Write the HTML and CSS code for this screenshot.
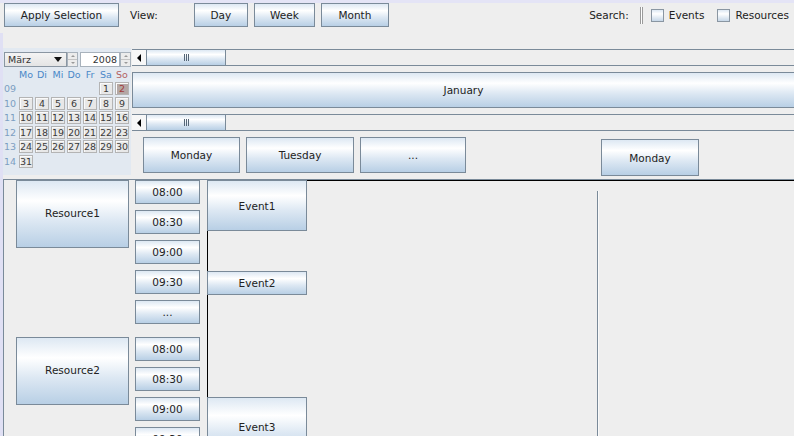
FILE: index.html
```html
<!DOCTYPE html>
<html lang="en">
<head>
  <meta charset="UTF-8">
  <title>Scheduler</title>
  <link rel="stylesheet" href="styles.css">
</head>
<body>

  <div class="frame">
    <div class="toolbar">
      <div class="btn apply">Apply Selection</div>
      <span class="label view-label">View:</span>
      <div class="btn day-btn">Day</div>
      <div class="btn week-btn">Week</div>
      <div class="btn month-btn">Month</div>

      <div class="search">
        <span class="label">Search:</span>
        <span class="sep"></span>
        <span class="check"></span>
        <span class="label">Events</span>
        <span class="check second"></span>
        <span class="label">Resources</span>
      </div>
    </div>

    <div class="main">
      <div class="top">
        <div class="calendar">
          <div class="cal-top">
            <div class="combo"><span>März</span><span class="drop"></span></div>
            <div class="spin"><span class="up"></span><span class="down"></span></div>
            <div class="year">2008</div>
            <div class="spin"><span class="up"></span><span class="down"></span></div>
          </div>
          <div class="cal-grid">
            <span></span>
            <span class="dh">Mo</span><span class="dh">Di</span><span class="dh">Mi</span><span class="dh">Do</span><span class="dh">Fr</span><span class="dh">Sa</span><span class="dh sun">So</span>

            <span class="wk">09</span>
            <span></span><span></span><span></span><span></span><span></span>
            <span class="day">1</span><span class="day sel">2</span>

            <span class="wk">10</span>
            <span class="day">3</span><span class="day">4</span><span class="day">5</span><span class="day">6</span><span class="day">7</span><span class="day">8</span><span class="day">9</span>

            <span class="wk">11</span>
            <span class="day">10</span><span class="day">11</span><span class="day">12</span><span class="day">13</span><span class="day">14</span><span class="day">15</span><span class="day">16</span>

            <span class="wk">12</span>
            <span class="day">17</span><span class="day">18</span><span class="day">19</span><span class="day">20</span><span class="day">21</span><span class="day">22</span><span class="day">23</span>

            <span class="wk">13</span>
            <span class="day">24</span><span class="day">25</span><span class="day">26</span><span class="day">27</span><span class="day">28</span><span class="day">29</span><span class="day">30</span>

            <span class="wk">14</span>
            <span class="day">31</span>
          </div>
        </div>

        <div class="header">
          <div class="hscroll">
            <div class="arrow"><span class="tri"></span></div>
            <div class="thumb"><span class="grip"></span></div>
          </div>
          <div class="btn month-bar">January</div>
          <div class="hscroll">
            <div class="arrow"><span class="tri"></span></div>
            <div class="thumb"><span class="grip"></span></div>
          </div>
          <div class="days">
            <div class="btn dayname mon">Monday</div>
            <div class="btn dayname tue">Tuesday</div>
            <div class="btn dayname more">...</div>
            <div class="btn dayname mon2">Monday</div>
          </div>
        </div>
      </div>

      <div class="schedule">
        <div class="resources">
          <div class="res-block">
            <div class="btn res">Resource1</div>
            <div class="slots">
              <div class="btn slot">08:00</div>
              <div class="btn slot">08:30</div>
              <div class="btn slot">09:00</div>
              <div class="btn slot">09:30</div>
              <div class="btn slot">...</div>
            </div>
          </div>
          <div class="res-block">
            <div class="btn res">Resource2</div>
            <div class="slots">
              <div class="btn slot">08:00</div>
              <div class="btn slot">08:30</div>
              <div class="btn slot">09:00</div>
              <div class="btn slot">09:30</div>
            </div>
          </div>
        </div>

        <div class="events">
          <div class="col first"></div>
          <div class="col second"></div>
          <div class="btn event ev1">Event1</div>
          <div class="btn event ev2">Event2</div>
          <div class="btn event ev3">Event3</div>
        </div>
      </div>
    </div>
  </div>

</body>
</html>
```

FILE: styles.css
```css
* {
  margin: 0;
  padding: 0;
  box-sizing: border-box;
}

body {
  width: 794px;
  height: 436px;
  overflow: hidden;
  background: #eeeeee;
  font-family: 'DejaVu Sans', sans-serif;
  font-size: 10.5px;
  color: #222;
}

.frame {
  border-top: 3px solid #e4e4f6;
  height: 436px;
  display: flex;
  flex-direction: column;
}

/* ocean style gradient button */
.btn {
  display: flex;
  align-items: center;
  justify-content: center;
  border: 1px solid #7a8a99;
  background: linear-gradient(#dde8f3 0%, #ffffff 30%, #dde8f3 60%, #b8cfe5 100%);
  white-space: nowrap;
}

/* toolbar */
.toolbar {
  display: flex;
  align-items: flex-start;
  flex-shrink: 0;
  height: 30px;
  padding-left: 4px;
}

.toolbar .btn {
  height: 24px;
}

.label {
  line-height: 24px;
  white-space: nowrap;
}

.apply {
  width: 115px;
}

.view-label {
  margin-left: 11px;
}

.day-btn {
  width: 54px;
  margin-left: 36px;
}

.week-btn {
  width: 61px;
  margin-left: 6px;
}

.month-btn {
  width: 68px;
  margin-left: 6px;
}

.search {
  margin-left: auto;
  margin-right: 5px;
  display: flex;
  align-items: center;
  height: 24px;
}

.sep {
  width: 3px;
  height: 17px;
  margin: 0 8px 0 11px;
  border-left: 1px solid #9a9a9a;
  border-right: 1px solid #9a9a9a;
  background: #fff;
}

.check {
  width: 13px;
  height: 13px;
  margin-right: 5px;
  border: 1px solid #8a96a2;
  background: linear-gradient(#dde8f3, #ffffff 35%, #c6d7e8);
}

.check.second {
  margin-left: 13px;
}

/* main area */
.main {
  flex: 1;
  min-height: 0;
  display: flex;
  flex-direction: column;
  border-left: 3px solid #e0e0f4;
}

.top {
  display: flex;
  flex-shrink: 0;
  height: 146px;
  padding-top: 15px;
}

/* date chooser */
.calendar {
  width: 128px;
  height: 127px;
  background: #e2e9f1;
  padding-top: 4px;
  font-size: 9.5px;
}

.cal-top {
  display: flex;
  height: 15px;
  padding-left: 1px;
}

.combo {
  width: 63px;
  display: flex;
  align-items: center;
  justify-content: space-between;
  padding: 0 4px 0 3px;
  border: 1px solid #8a96a2;
  background: linear-gradient(#f4f4f4, #e4e4e4);
  color: #333;
}

.drop {
  border-top: 5px solid #111;
  border-left: 4px solid transparent;
  border-right: 4px solid transparent;
}

.spin {
  width: 11px;
  display: flex;
  flex-direction: column;
  border: 1px solid #a8b2bc;
  background: #ececec;
}

.spin span {
  flex: 1;
  display: flex;
  align-items: center;
  justify-content: center;
}

.spin .up::after,
.spin .down::after {
  content: "";
  border-left: 2px solid transparent;
  border-right: 2px solid transparent;
}

.spin .up::after {
  border-bottom: 2px solid #999;
}

.spin .down::after {
  border-top: 2px solid #999;
}

.spin .up {
  border-bottom: 1px solid #c4c4c4;
}

.year {
  width: 40px;
  margin-left: 2px;
  text-align: right;
  padding-right: 2px;
  line-height: 13px;
  border: 1px solid #a8b2bc;
  background: #fff;
  color: #333;
}

.cal-grid {
  display: grid;
  grid-template-columns: repeat(8, 14px);
  grid-auto-rows: 13px;
  column-gap: 2px;
  row-gap: 1.6px;
  margin-top: 0.5px;
}

.cal-grid span {
  display: flex;
  align-items: center;
  justify-content: center;
}

.dh {
  color: #4a88c8;
}

.dh.sun {
  color: #b26262;
}

.wk {
  color: #7c9ec2;
}

.day {
  border: 1px solid #b4b4b4;
  background: #e8e8e8;
  box-shadow: inset 1px 1px 0 #fafafa;
  color: #3a3a3a;
}

.day.sel {
  background: #b4a7a5;
  color: #a23b3b;
}

/* header with scroll bars */
.header {
  flex: 1;
  margin-left: 1px;
  padding-top: 1px;
  overflow: hidden;
}

.hscroll {
  display: flex;
  height: 17px;
  border-top: 1px solid #7a8a99;
  border-bottom: 1px solid #7a8a99;
  background: #eeeeee;
}

.arrow {
  width: 14px;
  display: flex;
  align-items: center;
  justify-content: center;
  background: #f7f7f7;
}

.tri {
  border-right: 4px solid #000;
  border-top: 4px solid transparent;
  border-bottom: 4px solid transparent;
}

.thumb {
  width: 80px;
  display: flex;
  align-items: center;
  justify-content: center;
  border-left: 1px solid #7a8a99;
  border-right: 1px solid #7a8a99;
  background: linear-gradient(#dde8f3 0%, #ffffff 30%, #dde8f3 60%, #b8cfe5 100%);
}

.grip {
  width: 5px;
  height: 7px;
  background: linear-gradient(90deg, #556677 1px, transparent 1px) 0 0 / 2px 100%;
}

.month-bar {
  height: 36px;
  margin: 6px 0;
  border-right: none;
}

.days {
  display: flex;
  align-items: flex-start;
  padding-left: 11px;
  margin-top: 6px;
}

.dayname {
  height: 36px;
}

.mon {
  width: 97px;
}

.tue {
  width: 108px;
  margin-left: 6px;
}

.more {
  width: 106px;
  margin-left: 6px;
}

.mon2 {
  width: 98px;
  height: 37px;
  margin: 2px 0 0 135px;
}

/* resources and events */
.schedule {
  flex: 1;
  min-height: 0;
  display: flex;
  border-top: 1px solid #7a8a99;
  border-left: 1px solid #7a8a99;
}

.resources {
  width: 203px;
  flex-shrink: 0;
  display: flex;
  flex-direction: column;
  gap: 13px;
}

.res-block {
  display: flex;
  flex-shrink: 0;
  padding-left: 12px;
}

.res {
  width: 113px;
  height: 68px;
  padding-bottom: 3px;
  margin-right: 6px;
}

.slots {
  display: flex;
  flex-direction: column;
  gap: 6px;
}

.slot {
  width: 65px;
  height: 24px;
  flex-shrink: 0;
}

.events {
  flex: 1;
  position: relative;
  display: flex;
  border-top: 1px solid #000;
  border-left: 1px solid #000;
}

.col.first {
  width: 389px;
}

.col.second {
  flex: 1;
  margin-top: 10px;
  border-left: 1px solid #7a8a99;
  box-shadow: inset 1px 0 0 #fafafa;
}

.event {
  position: absolute;
  left: -1px;
  width: 100px;
}

.ev1 {
  top: -1px;
  height: 51px;
}

.ev2 {
  top: 90px;
  height: 24px;
}

.ev3 {
  top: 216px;
  height: 60px;
}
```
